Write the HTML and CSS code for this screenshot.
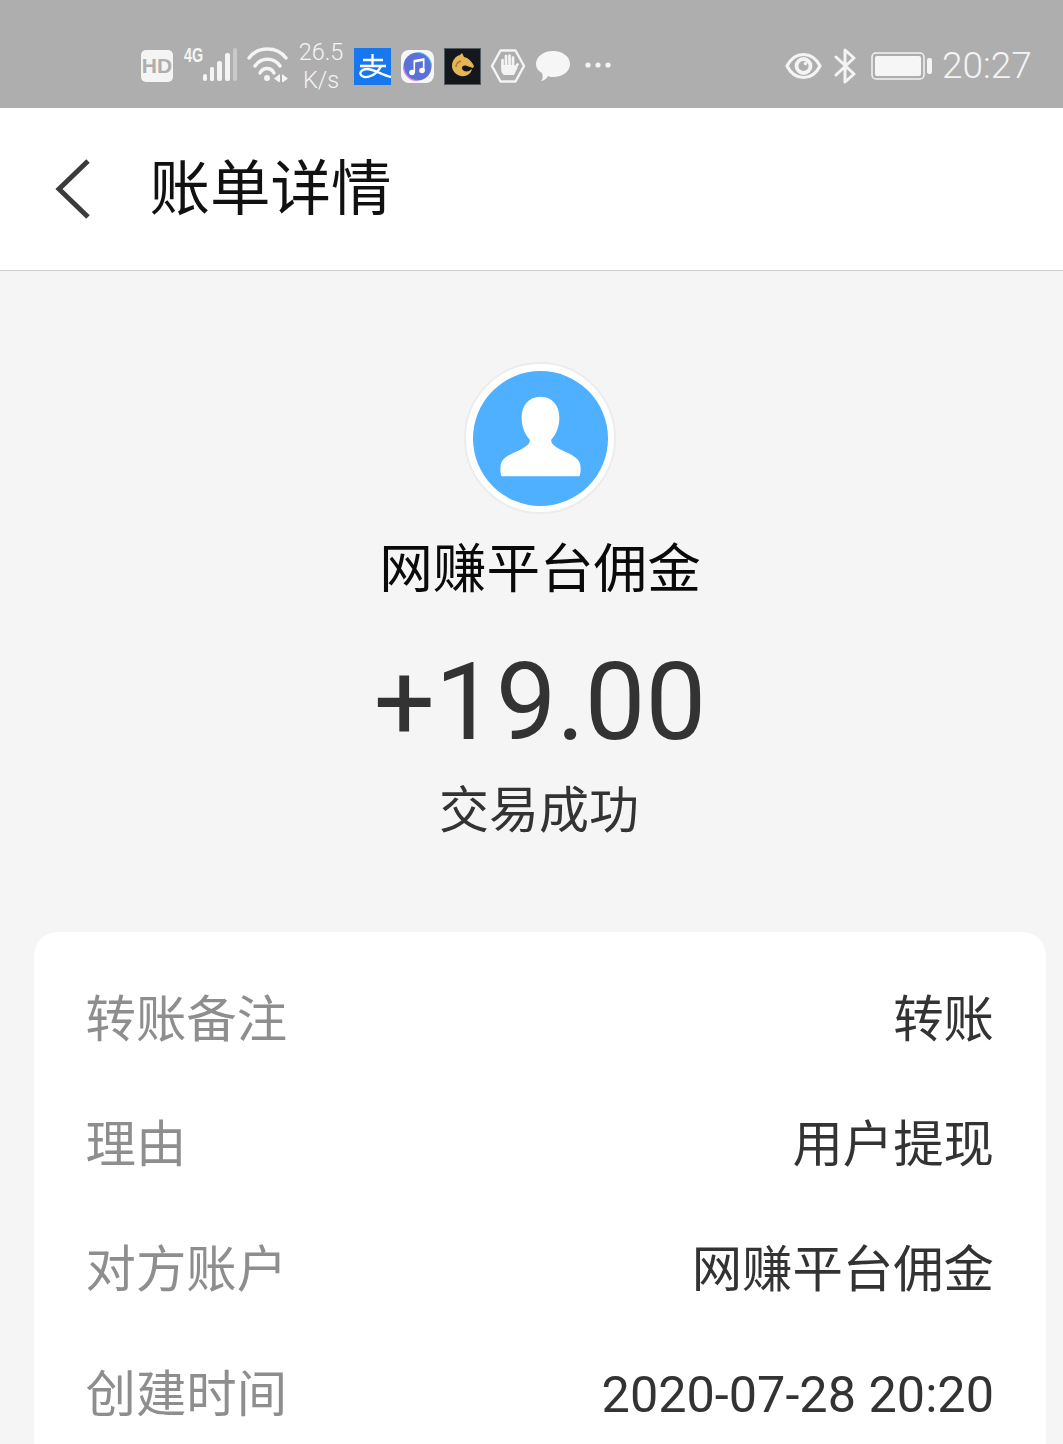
FILE: index.html
```html
<!DOCTYPE html>
<html lang="zh-CN">
<head>
<meta charset="utf-8">
<title>账单详情</title>
<link rel="stylesheet" href="styles.css">
</head>
<body>
<div class="status">
  <div class="hd">HD</div>
  <div class="net">
    <span class="net-text">4G</span>
    <svg width="36" height="36" viewBox="19 0 36 36">
      <rect x="19" y="28" width="4" height="7" rx="2" fill="#f4f4f4"/>
      <rect x="26" y="21" width="4" height="14" rx="1.500" fill="#f4f4f4"/>
      <rect x="33" y="15" width="5" height="20" rx="2" fill="#f4f4f4"/>
      <rect x="41" y="7" width="5" height="28" rx="2" fill="#f4f4f4"/>
      <rect x="49" y="2" width="4" height="33" rx="2" fill="#c9c9c9"/>
    </svg>
  </div>
  <svg class="i-wifi" width="42" height="36" viewBox="0 0 42 36" fill="none" stroke="#f4f4f4" stroke-width="3.400" stroke-linecap="round">
    <path d="M2 12C11 0 30 0 39 12"/><path d="M8 20C14 11 27 11 33 20"/><path d="M13 27C16 21 24 21 27 27"/>
    <circle cx="20" cy="32" r="3" fill="#f4f4f4" stroke="none"/>
    <path d="M27 32.500l6-4.500v9zM35 28l6 4.500-6 4.500z" fill="#f4f4f4" stroke="none"/>
  </svg>
  <div class="speed"><span>26.5</span><span>K/s</span></div>
  <svg class="i-ali" width="37" height="37" viewBox="0 0 37 37"><rect width="37" height="37" fill="#1677ee"/><g fill="none" stroke="#fff" stroke-width="2.300"><path d="M9 12H29M6 18H32"/><path d="M18.500 6V18"/><path d="M27 18C23 27 13 31 8 28C4 25 8 21 13 21C20 21 28 27 37 29"/></g></svg>
  <svg class="i-music" width="33" height="33" viewBox="0 0 33 33"><rect width="33" height="33" rx="8" fill="#f6f6f6"/><circle cx="16.500" cy="16.500" r="14" fill="#5a72d8"/><path d="M16.500 2.500A14 14 0 0 1 30.500 16.500" stroke="#59c6ee" stroke-width="1.200" fill="none"/><path d="M2.500 16.500A14 14 0 0 0 16.500 30.500" stroke="#d78ce6" stroke-width="1.400" fill="none"/><g fill="#fff"><circle cx="11" cy="22.500" r="2.800"/><circle cx="21" cy="20.500" r="2.800"/><path d="M12.500 10l11-2v12.500h-1.600v-9.500l-7.800 1.500V22.500h-1.600z"/></g></svg>
  <svg class="i-chess" width="37" height="37" viewBox="0 0 37 37"><rect x=".5" y=".5" width="36" height="36" fill="#14181d" stroke="#555b62"/><path d="M18 5l2 4c5 1 8 5 10 9l-1 2-6-2c-3-1-5 0-5 2 0 3 4 4 7 3l3-2c-1 5-6 8-11 7-5-1-9-5-9-10 0-6 4-10 8-11z" fill="#e6b556"/><path d="M17 13c-3 1-5 3-5 6" stroke="#a87c2c" stroke-width="1.500" fill="none"/></svg>
  <svg class="i-hand" width="36" height="36" viewBox="0 0 36 36"><path d="M10.500 2.500h15L34 18l-8.500 15.500h-15L2 18z" fill="none" stroke="#f4f4f4" stroke-width="2.400" stroke-linejoin="round"/><g stroke="#f4f4f4" stroke-width="2.700" stroke-linecap="round" fill="none"><path d="M12.500 12V19M16 8V18M19.500 7.500V18M23 9.500V19M24 21L27.500 16.500"/></g><path d="M11.200 17H24.300V20L28 19L24 27H15C13 27 12 25 11.200 23Z" fill="#f4f4f4"/></svg>
  <svg class="i-bubble" width="36" height="32" viewBox="0 0 36 32"><path d="M18 1C28 1 35 7 35 14S28 27 18 27C16 27 15 27 13 26C12 28 9 31 6 31C8 29 8 26 7 23C3 21 1 18 1 14C1 7 8 1 18 1Z" fill="#f6f6f6"/></svg>
  <svg class="i-dots" width="26" height="6" viewBox="0 0 26 6"><circle cx="3" cy="3" r="2.600" fill="#f4f4f4"/><circle cx="13" cy="3" r="2.600" fill="#f4f4f4"/><circle cx="23" cy="3" r="2.600" fill="#f4f4f4"/></svg>
  <svg class="i-eye" width="37" height="28" viewBox="0 0 37 28"><path d="M2 14C6 6 12 2.500 18.500 2.500S31 6 35 14C31 22 25 25.500 18.500 25.500S6 22 2 14Z" fill="none" stroke="#f4f4f4" stroke-width="3.200"/><circle cx="18.500" cy="14" r="7" fill="none" stroke="#f4f4f4" stroke-width="3.800"/><circle cx="20.500" cy="11.500" r="1.800" fill="#f4f4f4"/></svg>
  <svg class="i-bt" width="22" height="36" viewBox="0 0 22 36"><path d="M2 9l18 17-9 8V2l9 8L2 27" fill="none" stroke="#f4f4f4" stroke-width="3" stroke-linejoin="round" stroke-linecap="round"/></svg>
  <svg class="i-batt" width="61" height="28" viewBox="0 0 61 28"><rect x="1" y="1" width="52" height="26" rx="4" fill="none" stroke="#f4f4f4" stroke-width="1.500"/><rect x="4" y="4" width="46" height="20" rx="2" fill="#f6f6f6"/><rect x="56" y="6" width="5" height="16" rx="2" fill="#f4f4f4"/></svg>
  <div class="clock">20:27</div>
</div>

<header class="topbar">
  <svg class="back" width="36" height="60" viewBox="0 0 36 60"><path d="M33 2L4 30L33 58" fill="none" stroke="#3b3b3b" stroke-width="5"/></svg>
  <h1 class="title">账单详情</h1>
</header>

<main class="summary">
  <div class="avatar">
    <svg width="135" height="135" viewBox="0 0 136 136"><circle cx="68" cy="68" r="68" fill="#4eb0fe"/><path d="M68 26C80 26 87 35 87 47C87 56 84 63 79 69C78 72 81 75 86 78C96 83 106 86 108 94C109 99 108 106 107 106H29C28 106 27 99 28 94C30 86 40 83 50 78C55 75 58 72 57 69C52 63 49 56 49 47C49 35 56 26 68 26Z" fill="#fff"/></svg>
  </div>
  <div class="name">网赚平台佣金</div>
  <div class="amount">+19.00</div>
  <div class="state">交易成功</div>
</main>

<section class="card">
  <div class="row"><span class="label">转账备注</span><span class="value">转账</span></div>
  <div class="row"><span class="label">理由</span><span class="value">用户提现</span></div>
  <div class="row"><span class="label">对方账户</span><span class="value">网赚平台佣金</span></div>
  <div class="row"><span class="label">创建时间</span><span class="value">2020-07-28 20:20</span></div>
</section>
</body>
</html>
```

FILE: styles.css
```css
* { box-sizing: border-box; }
html, body { margin: 0; padding: 0; }
body {
  width: 1063px;
  height: 1444px;
  overflow: hidden;
  background: #f5f5f5;
  font-family: Roboto, "Noto Sans CJK SC", sans-serif;
}

.status {
  height: 108px;
  background: #aeaeae;
  display: flex;
  align-items: center;
  padding-left: 141px;
  color: #f4f4f4;
  padding-top: 24px;
}
.status svg { flex: none; display: block; }
.hd {
  flex: none;
  width: 32px;
  height: 32px;
  border-radius: 5px;
  background: #f4f4f4;
  color: #aeaeae;
  font: 700 21px/32px "Liberation Sans", sans-serif;
  text-align: center;
}
.net {
  flex: none;
  display: flex;
  align-items: flex-start;
  margin: -4px 0 0 11px;
}
.net-text {
  flex: none;
  width: 19px;
  margin-top: 1px;
  font: 700 20px/16px "Liberation Sans", sans-serif;
  transform: scaleX(.72);
  transform-origin: left center;
}
.i-wifi { margin-left: 8px; margin-top: -4px; }
.speed {
  margin-left: 9px;
  width: 46px;
  display: flex;
  flex-direction: column;
  align-items: center;
  font-size: 23.500px;
  font-weight: 300;
  line-height: 28px;
  white-space: nowrap;
  margin-top: 0;
}
.i-ali { margin-left: 10px; }
.i-music { margin-left: 10px; }
.i-chess { margin-left: 10px; }
.i-hand { margin-left: 9px; }
.i-bubble { margin-left: 9px; }
.i-dots { margin-left: 14px; margin-top: -2px; }
.i-eye { margin-left: 174px; }
.i-bt { margin-left: 12px; }
.i-batt { margin-left: 15px; }
.clock {
  margin-left: 10px;
  font-size: 37px;
  font-weight: 300;
  line-height: 40px;
}

.topbar {
  height: 163px;
  background: #fff;
  border-bottom: 1px solid #cfcfcf;
  display: flex;
  align-items: center;
  padding-left: 55px;
}
.back { flex: none; margin-top: -1px; }
.title {
  margin: 1px 0 0 58.500px;
  font-size: 60.500px;
  font-weight: 400;
  line-height: 80px;
  color: #111;
}

.summary {
  display: flex;
  flex-direction: column;
  align-items: center;
  padding-top: 91px;
  height: 661px;
  margin-left: 17px;
}
.avatar {
  width: 152px;
  height: 152px;
  border-radius: 50%;
  background: #fff;
  border: 2px solid #ececec;
  padding: 6.500px;
}
.avatar svg { display: block; }
.name {
  margin-top: 20px;
  font-size: 53.600px;
  line-height: 72px;
  color: #0a0a0a;
}
.amount {
  margin-top: 41px;
  font-size: 108px;
  line-height: 110px;
  color: #333;
}
.state {
  margin: 21px 2px 0 0;
  font-size: 50px;
  line-height: 66px;
  color: #333;
}

.card {
  margin: 0 17px 0 34px;
  background: #fff;
  border-radius: 24px 24px 0 0;
  padding: 25px 52px 0 51.500px;
}
.row {
  height: 125px;
  display: flex;
  justify-content: space-between;
  align-items: center;
  font-size: 50.400px;
  line-height: 70px;
  white-space: nowrap;
}
.label { color: #8e8e8e; }
.value { color: #333; }
```
